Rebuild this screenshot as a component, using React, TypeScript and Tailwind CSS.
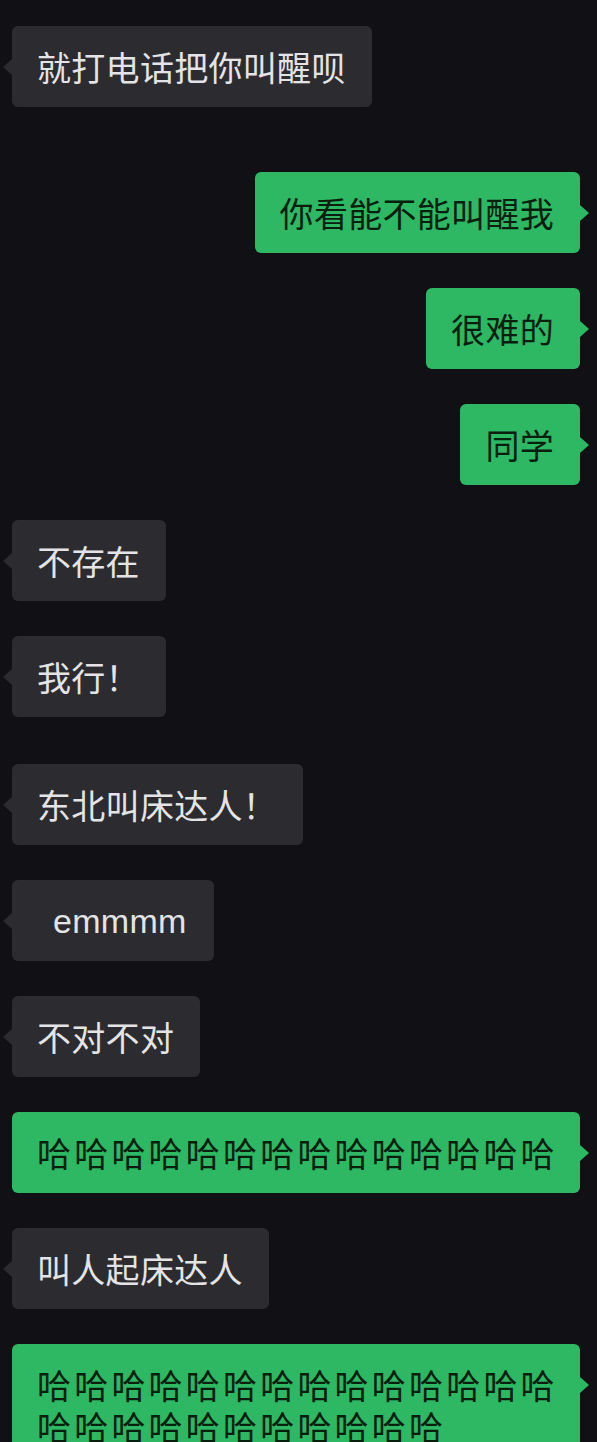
import React from 'react'

type Msg = {
  text: string
  me: boolean
  mt: string
  wide?: boolean
  latin?: boolean
}

const messages: Msg[] = [
  { text: '就打电话把你叫醒呗', me: false, mt: 'mt-[26px]' },
  { text: '你看能不能叫醒我', me: true, mt: 'mt-[65px]' },
  { text: '很难的', me: true, mt: 'mt-[35px]' },
  { text: '同学', me: true, mt: 'mt-[35px]' },
  { text: '不存在', me: false, mt: 'mt-[35px]' },
  { text: '我行！', me: false, mt: 'mt-[35px]' },
  { text: '东北叫床达人！', me: false, mt: 'mt-[47px]' },
  { text: 'emmmm', me: false, mt: 'mt-[35px]', latin: true },
  { text: '不对不对', me: false, mt: 'mt-[35px]' },
  { text: '哈哈哈哈哈哈哈哈哈哈哈哈哈哈', me: true, mt: 'mt-[35px]', wide: true },
  { text: '叫人起床达人', me: false, mt: 'mt-[35px]' },
  {
    text: '哈哈哈哈哈哈哈哈哈哈哈哈哈哈哈哈哈哈哈哈哈哈哈哈哈',
    me: true,
    mt: 'mt-[35px]',
    wide: true,
  },
]

const Bubble: React.FC<{ msg: Msg }> = ({ msg }) => {
  const color = msg.me ? 'bg-[#2eb864] text-[#07200e]' : 'bg-[#2c2b2f] text-[#e4e4e6]'
  return (
    <div className={`flex ${msg.me ? 'justify-end' : 'justify-start'} ${msg.mt}`}>
      <div
        className={`relative rounded-[6px] pt-[20px] pb-[19px] text-[34px] leading-[42px] ${color} ${
          msg.wide ? 'w-full pl-[25px] pr-[18px] tracking-[3.2px]' : 'pl-[25px] pr-[26px] tracking-[0.3px]'
        } ${msg.latin ? 'pl-[41px] pr-[27px]' : ''}`}
        style={
          msg.latin
            ? { fontFamily: '"Liberation Sans", Arial, sans-serif' }
            : undefined
        }
      >
        {msg.text}
        {msg.me ? (
          <span className="absolute right-[-9px] top-[33px] h-0 w-0 border-y-[8px] border-l-[9px] border-y-transparent border-l-[#2eb864]" />
        ) : (
          <span className="absolute left-[-9px] top-[33px] h-0 w-0 border-y-[8px] border-r-[9px] border-y-transparent border-r-[#2c2b2f]" />
        )}
      </div>
    </div>
  )
}

const App: React.FC = () => {
  return (
    <div
      className="h-[1442px] w-[597px] overflow-hidden bg-[#111014] pl-[12px] pr-[17px]"
      style={{ fontFamily: '"Noto Sans CJK SC", "Noto Sans", sans-serif' }}
    >
      {messages.map((m, i) => (
        <Bubble key={i} msg={m} />
      ))}
    </div>
  )
}

export default App
